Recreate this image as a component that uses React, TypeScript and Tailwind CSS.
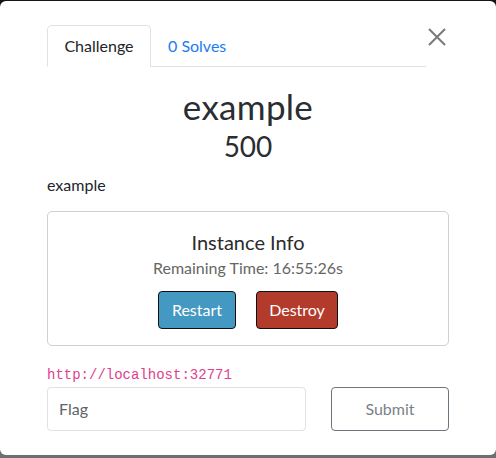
import React from 'react';

const App: React.FC = () => {
  return (
    <div className="h-[458px] w-[496px] overflow-hidden bg-[linear-gradient(#151515_0,#151515_50%,#6e6e6e_50%)] pt-px font-['Lato','Noto_Sans',sans-serif] text-[#212529]">
      <div className="relative h-[454px] rounded-[6px] bg-white px-[47px] pt-[24px]">
        <button className="absolute right-[50px] top-[27px] text-[#7a7a7a]">
          <svg width="18" height="18" viewBox="0 0 18 18" stroke="currentColor" strokeWidth="2" fill="none">
            <path d="M1 1 L17 17 M17 1 L1 17" />
          </svg>
        </button>

        <div className="mr-[23px] flex border-b border-[#dee2e6] text-[16px]">
          <div className="-mb-px flex h-[42px] w-[104px] items-center justify-center rounded-t-[5px] border border-b-white border-[#dee2e6] bg-white text-[#212529]">
            Challenge
          </div>
          <div className="flex h-[41px] items-center px-[17px] text-[#1a7cf0]">0 Solves</div>
        </div>

        <div className="mt-[20px] text-center text-[35px] leading-[38px] tracking-[0.3px] text-[#2a2d31]">example</div>
        <div className="mt-[4px] text-center text-[28px] leading-[34px] text-[#2a2d31]">500</div>

        <p className="mt-[12px] text-[16px] leading-[19px]">example</p>

        <div className="mt-[17px] flex h-[135px] flex-col items-center rounded-[5px] border border-[#d0d0d0] pt-[18px]">
          <div className="text-[20px] leading-[24px] text-[#2b2b2b]">Instance Info</div>
          <div className="mt-[4px] text-[16px] leading-[19px] text-[#666]">Remaining Time: 16:55:26s</div>
          <div className="mt-[14px] flex gap-[20px]">
            <button className="h-[38px] w-[78px] rounded-[4px] border border-[#111] bg-[#4499c2] text-[16px] text-white">Restart</button>
            <button className="h-[38px] w-[82px] rounded-[4px] border border-[#111] bg-[#b33b2c] text-[16px] text-white">Destroy</button>
          </div>
        </div>

        <div className="mt-[21px] font-['Liberation_Mono',monospace] text-[14px] leading-[16px] text-[#e0408e]">http://localhost:32771</div>

        <div className="mt-[4px] flex items-center justify-between">
          <div className="flex h-[44px] w-[259px] items-center rounded-[4px] border border-[#dee2e6] px-[11px] text-[16px] text-[#5f6469]">
            Flag
          </div>
          <button className="h-[44px] w-[118px] rounded-[4px] border border-[#6c757d] text-[16px] text-[#7a8288]">Submit</button>
        </div>
      </div>
    </div>
  );
};

export default App;
